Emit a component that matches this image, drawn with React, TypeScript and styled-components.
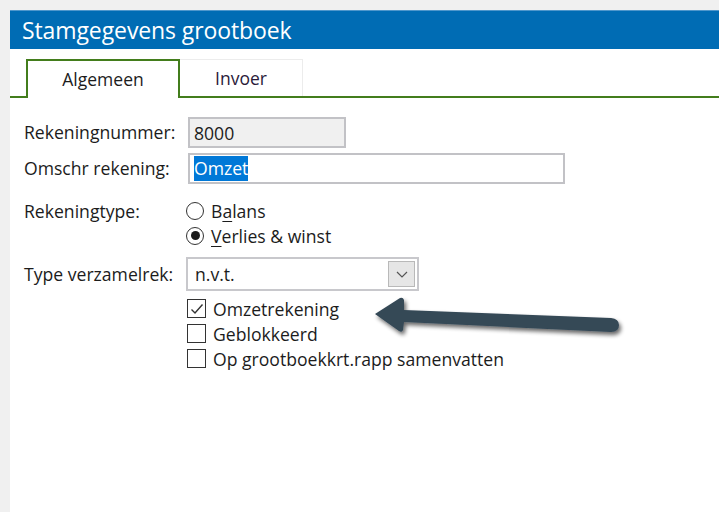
import React from "react";
import styled, { createGlobalStyle } from "styled-components";

const GlobalStyle = createGlobalStyle`
  html, body {
    margin: 0;
    padding: 0;
    background: #f0f0f0;
  }
  body {
    font-family: "Open Sans", "Noto Sans", sans-serif;
    color: #1c1c1c;
  }
`;

const Screen = styled.div`
  position: relative;
  width: 719px;
  height: 512px;
  padding: 10px 0 0 10px;
  box-sizing: border-box;
  background: #f0f0f0;
  overflow: hidden;
`;

const Window = styled.div`
  display: flex;
  flex-direction: column;
  height: 100%;
  background: #ffffff;
`;

const TitleBar = styled.div`
  height: 39px;
  display: flex;
  align-items: center;
  padding-left: 12px;
  background: #006cb4;
  border-top: 1px solid #4f97cc;
  box-sizing: border-box;
  color: #ffffff;
  font-size: 23px;
  letter-spacing: -0.1px;
`;

const TabStrip = styled.div`
  height: 49px;
  display: flex;
  align-items: flex-end;
  padding-left: 16px;
  border-bottom: 2px solid #437d1c;
  box-sizing: border-box;
`;

const Tab = styled.div<{ $active?: boolean }>`
  height: ${(p) => (p.$active ? "39px" : "37px")};
  width: ${(p) => (p.$active ? "154px" : "123px")};
  box-sizing: border-box;
  display: flex;
  align-items: center;
  justify-content: center;
  font-size: 17.5px;
  background: #ffffff;
  color: ${(p) => (p.$active ? "#1c1c1c" : "#2a1a3a")};
  border: ${(p) => (p.$active ? "2px solid #437d1c" : "1px solid #ececec")};
  border-bottom: none;
  border-left: ${(p) => (p.$active ? "2px solid #437d1c" : "none")};
  margin-bottom: ${(p) => (p.$active ? "-2px" : "0")};
  padding-bottom: ${(p) => (p.$active ? "2px" : "0")};
`;

const Form = styled.div`
  display: grid;
  grid-template-columns: 164px 1fr;
  padding: 19px 0 0 14px;
  font-size: 17.6px;
`;

const Label = styled.div<{ $mt?: number }>`
  height: 30px;
  display: flex;
  align-items: center;
  margin-top: ${(p) => p.$mt ?? 0}px;
`;

const Field = styled.div<{ $mt?: number }>`
  display: flex;
  flex-direction: column;
  margin-top: ${(p) => p.$mt ?? 0}px;
`;

const TextBox = styled.div<{ $width: number; $readOnly?: boolean }>`
  width: ${(p) => p.$width}px;
  height: 31px;
  box-sizing: border-box;
  display: flex;
  align-items: center;
  padding-left: 4px;
  border: 2px solid #c2c2c6;
  background: ${(p) => (p.$readOnly ? "#f0f0f0" : "#ffffff")};
`;

const Selected = styled.span`
  background: #0078d7;
  color: #ffffff;
  line-height: 25px;
`;

const OptionRow = styled.label`
  height: 25px;
  display: flex;
  align-items: center;
  gap: 7px;
  margin-left: -2px;
`;

const Radio = styled.span<{ $checked?: boolean }>`
  width: 18px;
  height: 18px;
  box-sizing: border-box;
  border-radius: 50%;
  border: 1.5px solid #333333;
  display: flex;
  align-items: center;
  justify-content: center;
  &::after {
    content: "";
    display: ${(p) => (p.$checked ? "block" : "none")};
    width: 9px;
    height: 9px;
    border-radius: 50%;
    background: #1a1a1a;
  }
`;

const CheckBox = styled.span`
  width: 19px;
  height: 19px;
  box-sizing: border-box;
  border: 1.5px solid #333333;
  display: flex;
  align-items: center;
  justify-content: center;
  margin-left: 1px;
`;

const Mnemonic = styled.span`
  text-decoration: underline;
  text-underline-offset: 3px;
`;

const Select = styled.div`
  width: 233px;
  height: 34px;
  box-sizing: border-box;
  border: 2px solid #c8c8cc;
  display: flex;
  align-items: center;
  justify-content: space-between;
  padding: 0 2px 0 7px;
  margin-left: -2px;
`;

const DropButton = styled.div`
  width: 27px;
  height: 26px;
  box-sizing: border-box;
  background: #e6e6e6;
  border: 1px solid #b9b9b9;
  display: flex;
  align-items: center;
  justify-content: center;
`;

const Checks = styled.div`
  grid-column: 2;
  display: flex;
  flex-direction: column;
  margin-top: 5px;
`;

const Arrow = styled.svg`
  position: absolute;
  left: 366px;
  top: 292px;
  overflow: visible;
`;

export default function App() {
  return (
    <>
      <GlobalStyle />
      <Screen>
        <Window>
          <TitleBar>Stamgegevens grootboek</TitleBar>
          <TabStrip>
            <Tab $active>Algemeen</Tab>
            <Tab>Invoer</Tab>
          </TabStrip>
          <Form>
            <Label>Rekeningnummer:</Label>
            <Field>
              <TextBox $width={158} $readOnly>8000</TextBox>
            </Field>

            <Label $mt={5}>Omschr rekening:</Label>
            <Field $mt={5}>
              <TextBox $width={377}>
                <Selected>Omzet</Selected>
              </TextBox>
            </Field>

            <Label $mt={14} style={{ height: 25 }}>Rekeningtype:</Label>
            <Field $mt={14}>
              <OptionRow>
                <Radio />
                <span>
                  B<Mnemonic>a</Mnemonic>lans
                </span>
              </OptionRow>
              <OptionRow>
                <Radio $checked />
                <span>
                  <Mnemonic>V</Mnemonic>erlies &amp; winst
                </span>
              </OptionRow>
            </Field>

            <Label $mt={9} style={{ height: 34 }}>Type verzamelrek:</Label>
            <Field $mt={9}>
              <Select>
                <span>n.v.t.</span>
                <DropButton>
                  <svg width="12" height="7" viewBox="0 0 12 7">
                    <path d="M1 1l5 5 5-5" fill="none" stroke="#555" strokeWidth="1.2" />
                  </svg>
                </DropButton>
              </Select>
            </Field>

            <Checks>
              <OptionRow>
                <CheckBox>
                  <svg width="14" height="12" viewBox="0 0 14 12">
                    <path d="M1.5 6.5l3.5 3.5 7.5-8.5" fill="none" stroke="#333" strokeWidth="1.4" />
                  </svg>
                </CheckBox>
                <span>Omzetrekening</span>
              </OptionRow>
              <OptionRow>
                <CheckBox />
                <span>Geblokkeerd</span>
              </OptionRow>
              <OptionRow>
                <CheckBox />
                <span>Op grootboekkrt.rapp samenvatten</span>
              </OptionRow>
            </Checks>
          </Form>
        </Window>
        <Arrow width="260" height="50" viewBox="0 0 260 50">
          <defs>
            <filter id="shadow" x="-10%" y="-50%" width="120%" height="200%">
              <feGaussianBlur in="SourceAlpha" stdDeviation="2" />
              <feOffset dx="2" dy="3" />
              <feComponentTransfer>
                <feFuncA type="linear" slope="0.6" />
              </feComponentTransfer>
              <feMerge>
                <feMergeNode />
                <feMergeNode in="SourceGraphic" />
              </feMerge>
            </filter>
          </defs>
          <path
            d="M9 22 L34 6 Q37 5 38 8 L38 18 L245 26 Q253 27 253 33 Q253 40 245 40 L38 30 L37 38 Q36 41 33 39 Z"
            fill="#344856"
            filter="url(#shadow)"
          />
        </Arrow>
      </Screen>
    </>
  );
}
